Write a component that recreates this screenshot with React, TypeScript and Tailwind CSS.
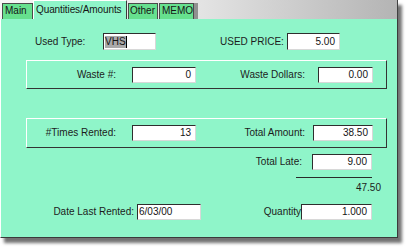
import React from 'react';

const font = { fontFamily: '"Liberation Sans", Arial, sans-serif' };

type FieldProps = { w: string; value: string; left?: boolean; h?: string };

const Field: React.FC<FieldProps> = ({ w, value, left, h = 'h-[16px]' }) => (
  <div
    className={`${w} ${h} shrink-0 bg-white border border-[#2e2e2e] border-b-[#d8d8d8] border-r-[#d8d8d8] flex items-center text-[10px] leading-none text-[#151515] whitespace-nowrap ${
      left ? 'justify-start pl-[1px]' : 'justify-end pr-[4px]'
    }`}
  >
    {value}
  </div>
);

const Label: React.FC<{ w: string; pr: string; children: React.ReactNode }> = ({ w, pr, children }) => (
  <div className={`${w} ${pr} shrink-0 text-right text-[10px] leading-none text-[#1c1c1c] whitespace-nowrap`}>{children}</div>
);

export default function App() {
  return (
    <div className="w-[408px] h-[248px] bg-white overflow-hidden" style={font}>
      <div className="w-[398px] h-[238px] flex flex-col shadow-[4px_5px_3px_rgba(0,0,0,0.55)]">
        {/* tab strip */}
        <div className="h-[19px] flex items-start bg-linear-to-r from-[#f6f6f6] via-[#e4e4e4] to-[#b4b4b4] border-r border-[#404040] whitespace-nowrap">
          <div className="ml-[2px] mt-[3px] w-[31px] h-[16px] bg-[#66e08e] border border-[#4a4a4a] border-b-0 text-[10px] leading-[14px] pl-[2px] text-[#151515]">
            Main
          </div>
          <div className="w-[94px] h-[19px] bg-[#8ff5c9] border-l border-t border-white border-r border-r-[#3a3a3a] text-[10px] tracking-[-0.1px] leading-[17px] pl-[2px] text-[#151515] overflow-hidden">
            Quantities/Amounts
          </div>
          <div className="ml-[1px] mt-[3px] w-[30px] h-[16px] bg-[#66e08e] border border-[#4a4a4a] border-b-0 text-[10px] leading-[14px] pl-[1px] text-[#151515] overflow-hidden">
            Other
          </div>
          <div className="ml-[1px] mt-[3px] w-[35px] h-[16px] bg-[#66e08e] border border-[#4a4a4a] border-b-0 text-[10px] leading-[14px] pl-[2px] text-[#151515] overflow-hidden">
            MEMO
          </div>
          <div className="mt-[3px] w-[4px] h-[16px] bg-[#909090]" />
        </div>

        {/* panel */}
        <div className="flex-1 bg-[#8ff5c9] border-l border-white border-r border-b border-r-[#3a3a3a] border-b-[#3a3a3a] flex flex-col">
          {/* row 1 */}
          <div className="mt-[14px] flex items-center pl-[34px] whitespace-nowrap">
            <div className="w-[68px] shrink-0 text-[10px] leading-none text-[#1c1c1c]">Used Type:</div>
            <div className="w-[53px] h-[17px] shrink-0 bg-white border border-[#2e2e2e] border-b-[#d8d8d8] border-r-[#d8d8d8] flex items-center pl-[1px] text-[10px] leading-none text-[#151515]">
              <span className="bg-[#a9a9a9] py-[1px]">VHS</span>
              <span className="w-[1px] h-[12px] bg-black" />
            </div>
            <div className="ml-[64px] w-[67px] shrink-0 text-[10px] leading-none text-[#1c1c1c]">USED PRICE:</div>
            <Field w="w-[53px]" h="h-[17px]" value="5.00" />
          </div>

          {/* group 1 */}
          <div className="mt-[10px] ml-[25px] w-[361px] h-[29px] border border-white border-b-[#333333] border-r-[#333333] flex items-center">
            <Label w="w-[105px]" pr="pr-[16px]">Waste #:</Label>
            <Field w="w-[64px]" value="0" />
            <Label w="w-[122px]" pr="pr-[13px]">Waste Dollars:</Label>
            <Field w="w-[55px]" value="0.00" />
          </div>

          {/* group 2 */}
          <div className="mt-[29px] ml-[25px] w-[361px] h-[30px] border border-white border-b-[#333333] border-r-[#333333] flex items-center">
            <Label w="w-[105px]" pr="pr-[16px]">#Times Rented:</Label>
            <Field w="w-[64px]" value="13" />
            <Label w="w-[117px]" pr="pr-[8px]">Total Amount:</Label>
            <Field w="w-[60px]" value="38.50" />
          </div>

          {/* total late */}
          <div className="mt-[6px] flex items-center">
            <Label w="w-[311px]" pr="pr-[10px]">Total Late:</Label>
            <Field w="w-[60px]" value="9.00" />
          </div>

          <div className="mt-[7px] ml-[295px] w-[76px] h-[1px] bg-[#2a2a2a]" />

          <div className="mt-[4px] w-[380px] text-right text-[10px] leading-[12px] text-[#1c1c1c]">47.50</div>

          {/* last row */}
          <div className="mt-[10px] flex items-center">
            <Label w="w-[136px]" pr="pr-[3px]">Date Last Rented:</Label>
            <Field w="w-[64px]" value="6/03/00" left />
            <Label w="w-[100px]" pr="pr-[0px]">Quantity</Label>
            <Field w="w-[71px]" value="1.000" />
          </div>
        </div>
      </div>
    </div>
  );
}
